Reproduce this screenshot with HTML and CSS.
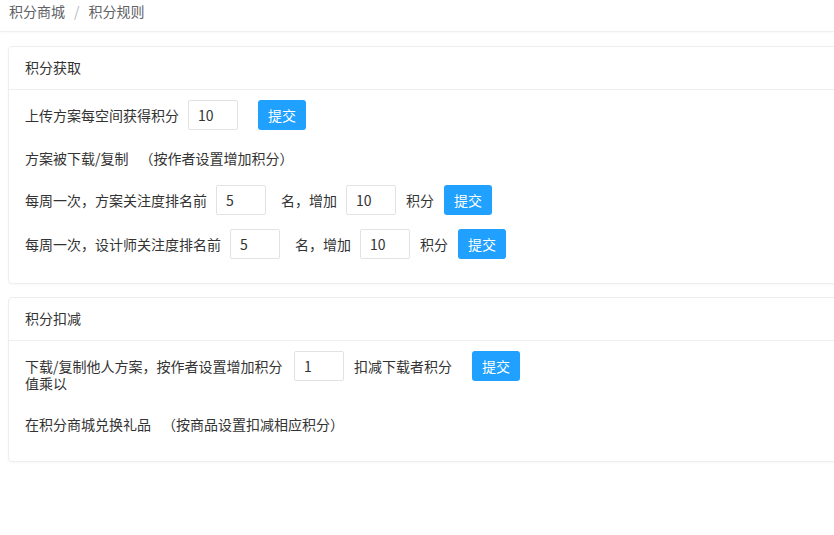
FILE: index.html
```html
<!DOCTYPE html>
<html lang="zh-CN">
<head>
<meta charset="utf-8">
<title>积分规则</title>
<link rel="stylesheet" href="styles.css">
</head>
<body>
<div class="crumbs">
  <span class="crumb">积分商城</span><span class="sep">/</span><span class="crumb">积分规则</span>
</div>
<div class="main">
  <section class="card">
    <div class="card-head">积分获取</div>
    <div class="card-body">
      <div class="row">
        <span class="txt">上传方案每空间获得积分</span>
        <input class="in" type="text" value="10">
        <button class="btn btn-far">提交</button>
      </div>
      <div class="row row-text">
        <span class="txt">方案被下载/复制　<span class="note">（按作者设置增加积分）</span></span>
      </div>
      <div class="row">
        <span class="txt">每周一次，方案关注度排名前</span>
        <input class="in" type="text" value="5">
        <span class="txt txt-wide">名，增加</span>
        <input class="in" type="text" value="10">
        <span class="txt">积分</span>
        <button class="btn">提交</button>
      </div>
      <div class="row">
        <span class="txt">每周一次，设计师关注度排名前</span>
        <input class="in" type="text" value="5">
        <span class="txt txt-wide">名，增加</span>
        <input class="in" type="text" value="10">
        <span class="txt">积分</span>
        <button class="btn">提交</button>
      </div>
    </div>
  </section>
  <section class="card">
    <div class="card-head">积分扣减</div>
    <div class="card-body">
      <div class="row row-top">
        <span class="txt txt-wrap">下载/复制他人方案，按作者设置增加积分值乘以</span>
        <input class="in" type="text" value="1">
        <span class="txt txt-line">扣减下载者积分</span>
        <button class="btn btn-far">提交</button>
      </div>
      <div class="row row-text">
        <span class="txt">在积分商城兑换礼品　<span class="note">（按商品设置扣减相应积分）</span></span>
      </div>
    </div>
  </section>
</div>
</body>
</html>
```
FILE: styles.css
```css
html, body {
  margin: 0;
  padding: 0;
  background: #ffffff;
  overflow: hidden;
}
body {
  font-family: "Noto Sans CJK SC", "Liberation Sans", sans-serif;
  font-size: 14px;
  color: #333333;
}
.crumbs {
  height: 31px;
  line-height: 23px;
  padding-left: 9px;
  border-bottom: 1px solid #f0f0f0;
  box-shadow: 0 1px 2px rgba(0, 0, 0, 0.03);
  color: #606266;
  display: flex;
  align-items: flex-start;
}
.sep {
  color: #b4b8bf;
  margin: 0 9px;
}
.main {
  width: 900px;
  padding: 14px 0 0 8px;
}
.card {
  border: 1px solid #eeeeee;
  border-radius: 4px;
  box-shadow: 0 1px 3px rgba(0, 0, 0, 0.03);
  margin-bottom: 13px;
}
.card-head {
  height: 42px;
  line-height: 41px;
  padding: 0 16px;
  border-bottom: 1px solid #eeeeee;
  color: #333333;
}
.card-body {
  padding: 10px 16px 24px;
  display: flex;
  flex-direction: column;
  gap: 14px;
}
.row {
  display: flex;
  align-items: center;
  height: 30px;
}
.row-text {
  height: 27px;
}
.row-top {
  height: auto;
  align-items: flex-start;
}
.txt {
  line-height: 20px;
  white-space: nowrap;
}
.note {
  margin-left: 4px;
}
.txt-wide {
  margin-left: 5px;
}
.txt-line {
  line-height: 30px;
}
.txt-wrap {
  white-space: normal;
  width: 260px;
  line-height: 17px;
  padding: 7px 0 4px;
}
.in {
  box-sizing: border-box;
  width: 50px;
  height: 30px;
  margin: 0 10px 0 9px;
  padding: 0 0 0 9px;
  border: 1px solid #e2e2e2;
  border-radius: 2px;
  font-family: "Noto Sans CJK SC", "Liberation Sans", sans-serif;
  font-size: 14px;
  color: #333333;
  background: #ffffff;
  outline: none;
}
.btn {
  box-sizing: border-box;
  width: 48px;
  height: 30px;
  margin-left: 10px;
  padding: 0;
  border: none;
  border-radius: 3px;
  background: #20a0ff;
  color: #ffffff;
  font-family: "Noto Sans CJK SC", "Liberation Sans", sans-serif;
  font-size: 14px;
  cursor: pointer;
}
.btn-far {
  margin-left: 20px;
}
.in + .btn-far {
  margin-left: 10px;
}
```
